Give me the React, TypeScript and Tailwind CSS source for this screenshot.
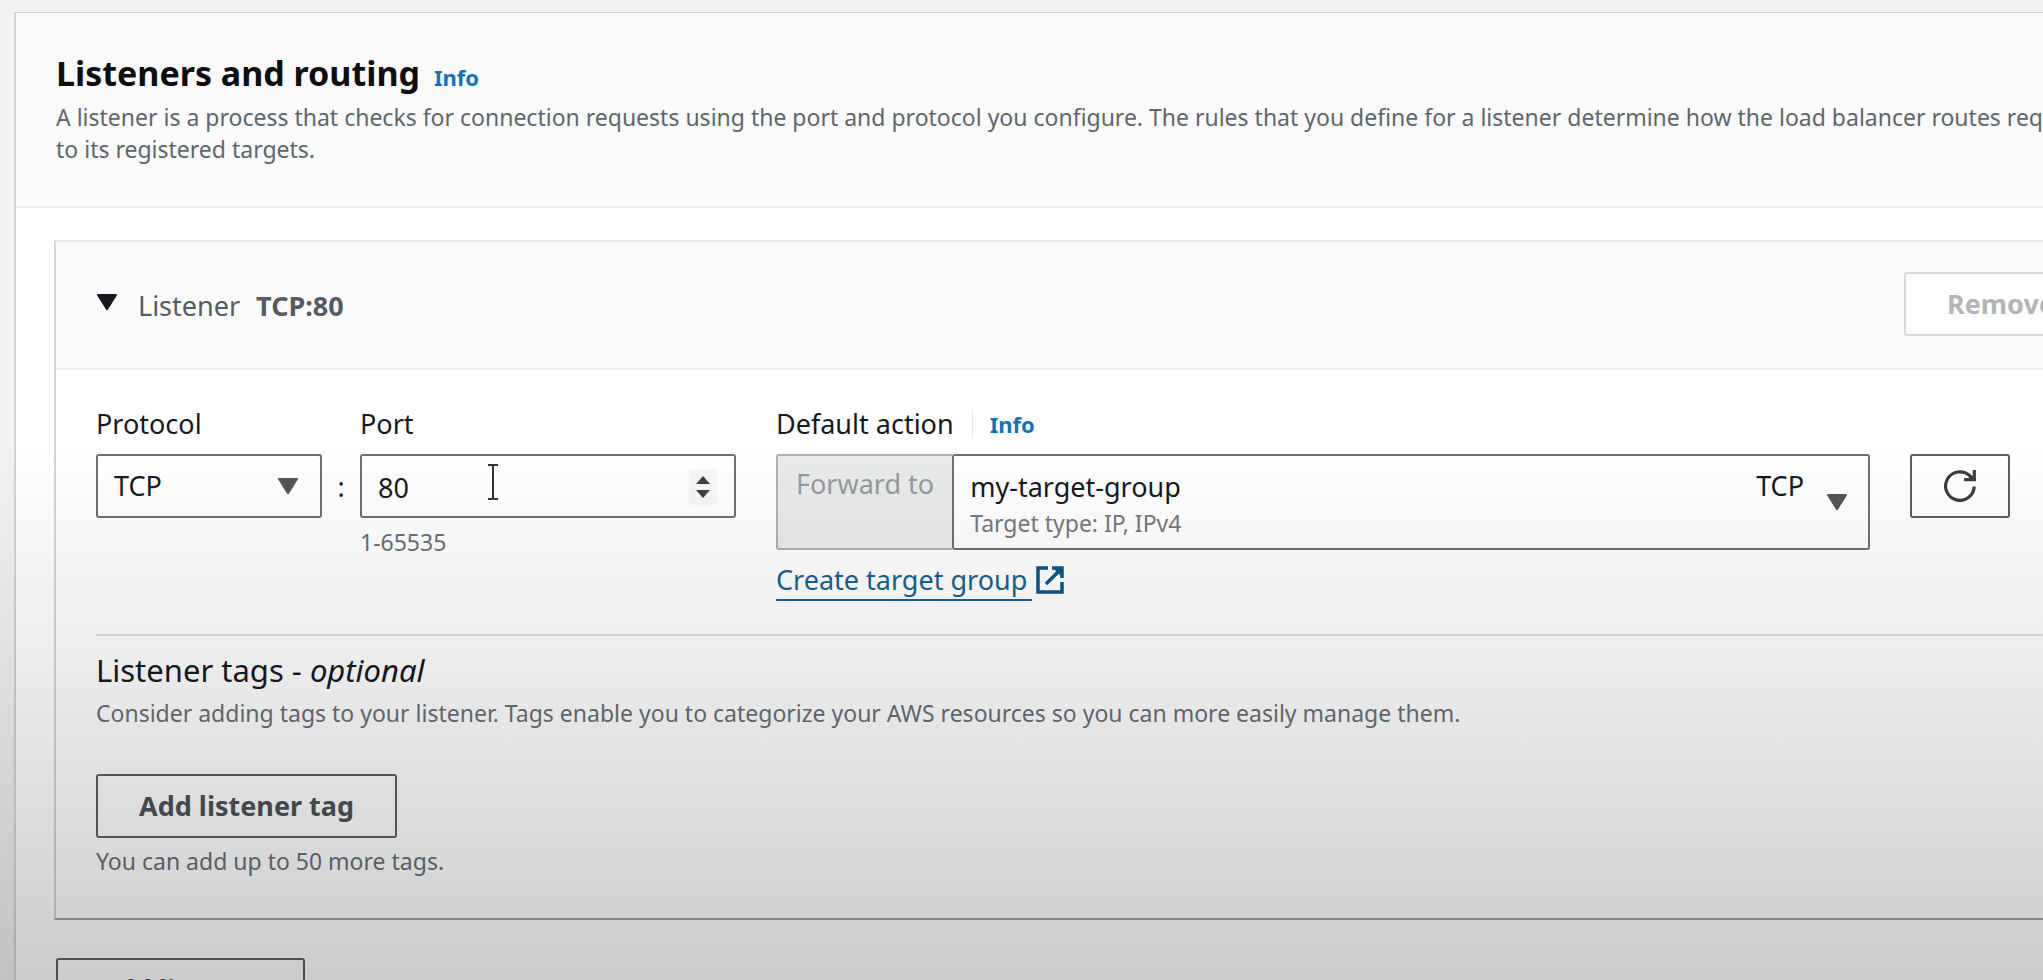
import { useState } from 'react';

function Caret({ className }: { className: string }) {
  return (
    <svg viewBox="0 0 22 18" aria-hidden="true" className={className}>
      <path d="M2 1h18a1 1 0 0 1 .8 1.6l-8.800 14a1.200 1.200 0 0 1-2 0L1.200 2.600A1 1 0 0 1 2 1z" fill="currentColor" />
    </svg>
  );
}

function StepperArrows() {
  return (
    <svg viewBox="0 0 14 22" aria-hidden="true" className="h-[22px] w-[14px]">
      <path d="M7 0l7 8H0zM7 22l7-8H0z" fill="currentColor" />
    </svg>
  );
}

function TextCursor() {
  return (
    <svg viewBox="0 0 16 40" aria-hidden="true" className="pointer-events-none absolute top-2 left-[125px] h-10 w-4">
      <path d="M3 3h4l1 1 1-1h4M8 4v32M3 37h4l1-1 1 1h4" fill="none" stroke="#fff" strokeWidth="5" />
      <path d="M3 3h4l1 1 1-1h4M8 4v32M3 37h4l1-1 1 1h4" fill="none" stroke="#333" strokeWidth="2" />
    </svg>
  );
}

const button = 'h-16 rounded-[3px] border-2 px-[41px] text-[27px] leading-10 font-bold whitespace-nowrap';
const field = 'w-full appearance-none rounded-[3px] border-2 border-[#6f7070] bg-white text-[27px] text-[#16191f] outline-none';
const hint = 'text-[23px] leading-8 text-[#687078]';

export default function App() {
  const [port, setPort] = useState('80');

  return (
    <main className="relative h-screen overflow-hidden bg-[#f1f3f3] pt-3 pl-[14px] font-['Noto_Sans',sans-serif] text-[27px] leading-10 text-[#16191f]">
      <section className="min-h-screen w-[calc(100%+135px)] border-t border-l-2 border-[#d3d5d5] bg-white">
        <header className="border-b-2 border-[#e9ebeb] bg-[#fafafa] pt-10 pr-16 pb-[41px] pl-10">
          <div className="flex items-baseline gap-[14px]">
            <h1 className="text-[34px] leading-10 font-bold text-[#0c0e12]">Listeners and routing</h1>
            <a href="#info" className="text-[22px] leading-8 font-bold text-[#0f73b8]">Info</a>
          </div>
          <p className="mt-2 text-[23px] leading-8 text-[#5f666d]">
            A listener is a process that checks for connection requests using the port and protocol you configure. The
            rules that you define for a listener determine how the load balancer routes requests to its registered
            targets.
          </p>
        </header>

        <div className="px-[38px] pt-8">
          <section className="border-2 border-t-[#e6e8e8] border-r-[#d5d7d7] border-b-[#a3a4a4] border-l-[#d5d7d7] bg-white">
            <header className="flex items-center justify-between border-b-2 border-[#eceeee] bg-[#fafafa] px-10 pt-[30px] pb-8">
              <h2 className="flex items-center pt-1 text-[27px] leading-10 font-normal text-[#545b64]">
                <button type="button" aria-label="Collapse listener" className="mr-5 text-[#16191f]">
                  <Caret className="mb-2 h-[18px] w-[22px]" />
                </button>
                Listener
                <strong className="ml-4">TCP:80</strong>
              </h2>
              <button type="button" disabled className={`${button} border-[#d5d9d9] bg-white text-[#b1b5b6]`}>
                Remove
              </button>
            </header>

            <div className="px-10 pt-[34px] pb-[41px]">
              <div className="flex items-start pr-[88px]">
                <div className="w-[226px]">
                  <label htmlFor="protocol" className="mb-[10px] block">Protocol</label>
                  <div className="relative">
                    <select id="protocol" className={`${field} h-16 pl-4`}>
                      <option>TCP</option>
                    </select>
                    <Caret className="pointer-events-none absolute top-[23px] right-[23px] h-[18px] w-[22px] text-[#545557]" />
                  </div>
                </div>
                <span className="mt-[51px] w-[38px] text-center leading-[64px]">:</span>
                <div className="w-[376px]">
                  <label htmlFor="port" className="mb-[10px] block">Port</label>
                  <div className="relative">
                    <input
                      id="port"
                      type="number"
                      min={1}
                      max={65535}
                      value={port}
                      onChange={(e) => setPort(e.target.value)}
                      className={`${field} h-16 pt-[2px] pl-4 [appearance:textfield] [&::-webkit-inner-spin-button]:appearance-none`}
                    />
                    <span className="pointer-events-none absolute top-[15px] right-[19px] flex h-9 w-7 items-center justify-center bg-[#f7f7f7] text-[#3f4042]">
                      <StepperArrows />
                    </span>
                    <TextCursor />
                  </div>
                  <p className={`${hint} mt-2`}>1-65535</p>
                </div>

                <div className="ml-10 flex-1">
                  <div className="mb-[10px] flex items-center">
                    <label htmlFor="target-group">Default action</label>
                    <span className="ml-[18px] h-7 border-l border-[#e6e8e8]" />
                    <a href="#action-info" className="ml-[17px] text-[22px] font-bold text-[#0f73b8]">Info</a>
                  </div>
                  <div className="flex h-24">
                    <div className="rounded-l-[3px] border-2 border-r-0 border-[#adb1b1] bg-[#e9ebeb] px-[18px] pt-2 whitespace-nowrap text-[#959a9b]">
                      Forward to
                    </div>
                    <div className="relative flex-1">
                      <select id="target-group" className={`${field} h-full pb-[30px] pl-4`}>
                        <option>my-target-group</option>
                      </select>
                      <span className="pointer-events-none absolute top-[53px] left-[18px] text-[23px] leading-8 text-[#74797e]">
                        Target type: IP, IPv4
                      </span>
                      <span className="pointer-events-none absolute top-3 right-[66px] leading-10">TCP</span>
                      <Caret className="pointer-events-none absolute top-[39px] right-[22px] h-[18px] w-[22px] text-[#545557]" />
                    </div>
                  </div>
                  <a href="#create-target-group" className="mt-[10px] flex w-fit items-start text-[#19618f]">
                    <span className="border-b-2 border-[#19618f] pr-[5px] leading-[39px]">Create target group</span>
                    <svg viewBox="0 0 28 28" aria-hidden="true" className="mt-[6px] ml-1 h-7 w-7 text-[#0a558c]">
                      <path d="M12 2H2v24h24V16M16 2h10v10M25 3L10 18" fill="none" stroke="currentColor" strokeWidth="3.5" />
                      <path d="M16 1h11v11z" fill="currentColor" />
                    </svg>
                  </a>
                </div>

                <button
                  type="button"
                  aria-label="Refresh target groups"
                  className="mt-[50px] ml-10 flex h-16 w-[100px] items-center justify-center rounded-[3px] border-2 border-[#5f6062] bg-white text-[#3b3d40]"
                >
                  <svg viewBox="0 0 32 32" aria-hidden="true" className="h-8 w-8">
                    <path d="M30.200 16.500A14.300 14.300 0 1 1 25.500 5.500L29.500 9.500M30.300 0V11M32 9.700H20" fill="none" stroke="currentColor" strokeWidth="3.2" />
                    <path d="M25 5.500L30 6v4h-5z" fill="currentColor" />
                  </svg>
                </button>
              </div>

              <hr className="mt-[33px] border-t-2 border-[#dfe1e1]" />

              <h3 className="mt-4 text-[31px] leading-9">
                Listener tags - <em>optional</em>
              </h3>
              <p className={`${hint} mt-[9px]`}>
                Consider adding tags to your listener. Tags enable you to categorize your AWS resources so you can more
                easily manage them.
              </p>
              <button type="button" className={`${button} mt-[45px] border-[#5f6062] bg-white text-[#4c535b]`}>
                Add listener tag
              </button>
              <p className={`${hint} mt-[7px]`}>You can add up to 50 more tags.</p>
            </div>
          </section>

          <button type="button" className={`${button} mt-[38px] ml-0.5 border-[#5f6062] bg-white text-[#4c535b]`}>
            Add listener
          </button>
        </div>
      </section>

      <div className="pointer-events-none absolute inset-0 bg-linear-to-b from-transparent from-45% via-black/6 via-63% to-black/20" />
    </main>
  );
}
